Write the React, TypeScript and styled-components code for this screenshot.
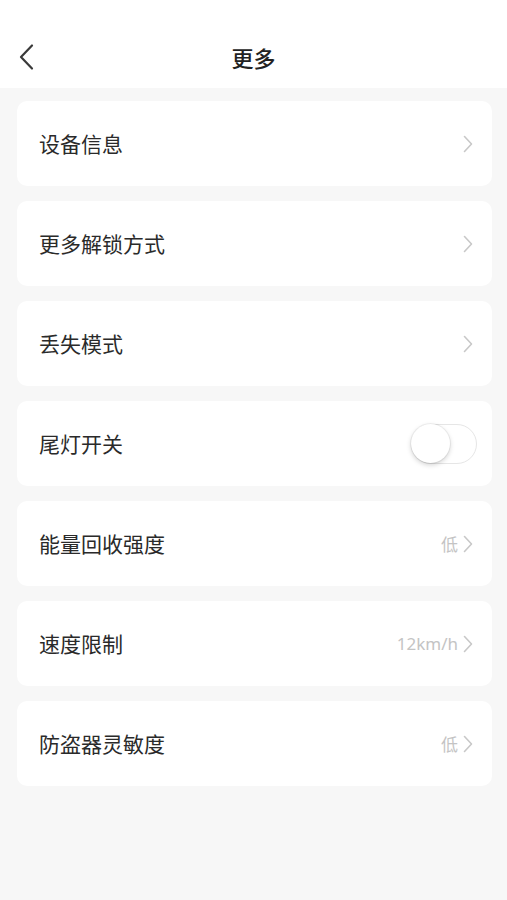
import React from "react";
import styled, { createGlobalStyle } from "styled-components";

const GlobalStyle = createGlobalStyle`
  html, body {
    margin: 0;
    padding: 0;
    background: #f7f7f7;
  }
  body {
    font-family: "Noto Sans CJK SC", "Noto Sans", sans-serif;
  }
`;

const Page = styled.div`
  width: 507px;
  min-height: 900px;
  background: #f7f7f7;
`;

const NavBar = styled.div`
  height: 88px;
  background: #ffffff;
  display: grid;
  grid-template-columns: 60px 1fr 60px;
  align-items: center;
  padding-top: 26px;
  box-sizing: border-box;
`;

const BackButton = styled.button`
  border: none;
  background: transparent;
  padding: 0 0 0 17px;
  display: flex;
  align-items: center;
  cursor: pointer;
  svg {
    width: 20px;
    height: 28px;
  }
`;

const Title = styled.h1`
  margin: 0;
  text-align: center;
  font-size: 22px;
  font-weight: 500;
  color: #222222;
`;

const List = styled.div`
  display: flex;
  flex-direction: column;
  gap: 15px;
  padding: 13px 15px 0 17px;
`;

const Card = styled.div`
  height: 85px;
  background: #ffffff;
  border-radius: 10px;
  display: flex;
  align-items: center;
  justify-content: space-between;
  padding: 0 18px 0 22px;
  box-sizing: border-box;
`;

const Label = styled.span`
  font-size: 21px;
  color: #2a2a2a;
  margin-top: -2px;
`;

const Right = styled.div`
  display: flex;
  align-items: center;
  gap: 4px;
`;

const Value = styled.span`
  font-size: 17px;
  color: #c4c4c4;
  font-family: "Noto Sans", "Noto Sans CJK SC", sans-serif;
`;

const Chevron = styled.svg`
  width: 12px;
  height: 20px;
`;

const Toggle = styled.div<{ $on: boolean }>`
  position: relative;
  width: 66px;
  height: 40px;
  border-radius: 20px;
  border: 1.5px solid #e6e6e6;
  background: ${({ $on }) => ($on ? "#4cd964" : "#ffffff")};
  box-sizing: border-box;
  margin-right: -3px;
`;

const Knob = styled.div<{ $on: boolean }>`
  position: absolute;
  top: -1px;
  left: ${({ $on }) => ($on ? "27px" : "-1px")};
  width: 39px;
  height: 39px;
  border-radius: 50%;
  background: #ffffff;
  box-shadow: 0 2px 5px rgba(0, 0, 0, 0.18), 0 0 0 1px rgba(0, 0, 0, 0.05);
`;

const ArrowRight = () => (
  <Chevron viewBox="0 0 12 20">
    <path d="M2.5 2.5 L9.5 10 L2.5 17.5" fill="none" stroke="#c8c8c8" strokeWidth="1.6" strokeLinecap="round" strokeLinejoin="round" />
  </Chevron>
);

type Row =
  | { label: string; kind: "link"; value?: string }
  | { label: string; kind: "switch"; on: boolean };

const ROWS: Row[] = [
  { label: "设备信息", kind: "link" },
  { label: "更多解锁方式", kind: "link" },
  { label: "丢失模式", kind: "link" },
  { label: "尾灯开关", kind: "switch", on: false },
  { label: "能量回收强度", kind: "link", value: "低" },
  { label: "速度限制", kind: "link", value: "12km/h" },
  { label: "防盗器灵敏度", kind: "link", value: "低" },
];

export default function App() {
  return (
    <Page>
      <GlobalStyle />
      <NavBar>
        <BackButton aria-label="返回">
          <svg viewBox="0 0 20 28">
            <path d="M15 2.5 L4 14 L15 25.5" fill="none" stroke="#3a3a3a" strokeWidth="2.2" strokeLinecap="round" strokeLinejoin="round" />
          </svg>
        </BackButton>
        <Title>更多</Title>
        <span />
      </NavBar>
      <List>
        {ROWS.map((row) => (
          <Card key={row.label}>
            <Label>{row.label}</Label>
            {row.kind === "switch" ? (
              <Toggle $on={row.on}>
                <Knob $on={row.on} />
              </Toggle>
            ) : (
              <Right>
                {row.value && <Value>{row.value}</Value>}
                <ArrowRight />
              </Right>
            )}
          </Card>
        ))}
      </List>
    </Page>
  );
}
